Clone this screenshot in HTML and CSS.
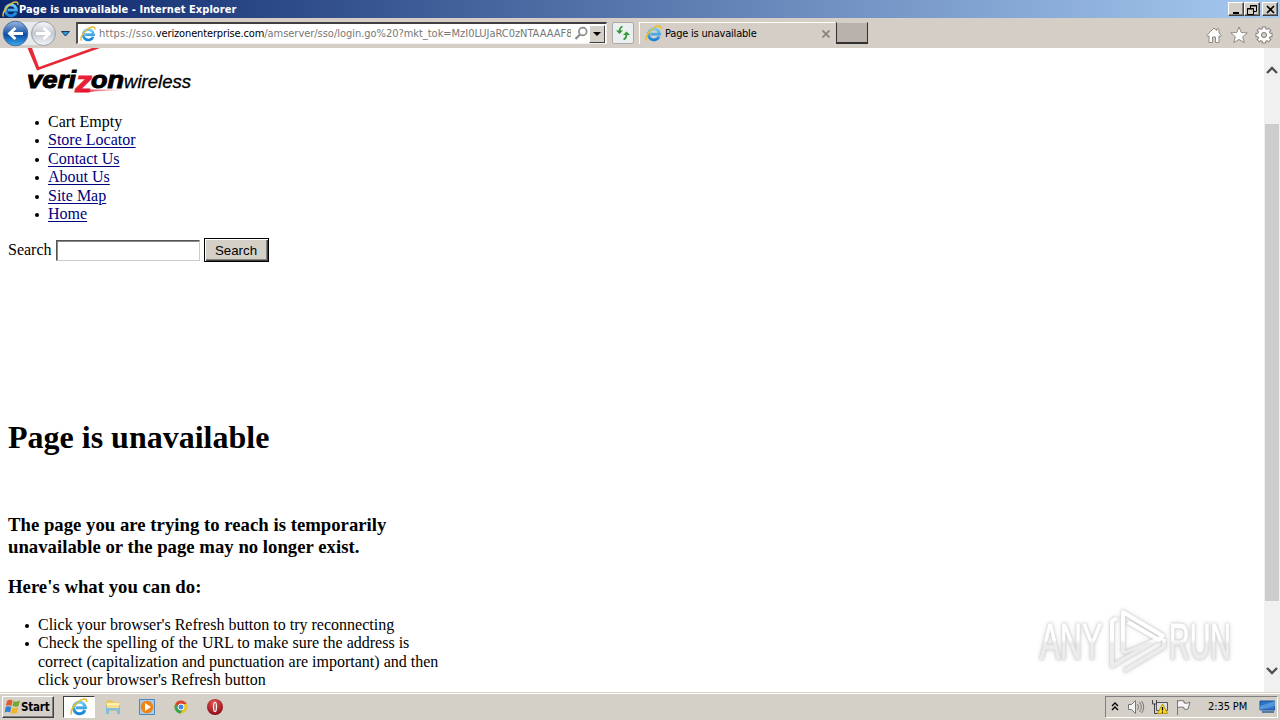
FILE: index.html
```html
<!DOCTYPE html>
<html lang="en">
<head>
<meta charset="utf-8">
<title>Page is unavailable</title>
<link rel="stylesheet" href="styles.css">
</head>
<body>
<svg class="defs" width="0" height="0">
  <defs>
    <linearGradient id="ieBlue" x1="0" y1="0" x2="0" y2="1"><stop offset="0" stop-color="#72cdf7"/><stop offset="1" stop-color="#1583d6"/></linearGradient>
    <linearGradient id="navBlue" x1="0" y1="0" x2="0" y2="1"><stop offset="0" stop-color="#9fb9dc"/><stop offset=".45" stop-color="#2460ae"/><stop offset=".55" stop-color="#0b4ba3"/><stop offset="1" stop-color="#38aef0"/></linearGradient>
    <linearGradient id="navGray" x1="0" y1="0" x2="0" y2="1"><stop offset="0" stop-color="#f8f9fb"/><stop offset=".5" stop-color="#c3c8cf"/><stop offset="1" stop-color="#f4f7fa"/></linearGradient>
    <linearGradient id="swoosh" x1="0" y1="0" x2="1" y2="0"><stop offset="0" stop-color="#e8112d"/><stop offset="1" stop-color="#e8112d" stop-opacity="0"/></linearGradient>
    <linearGradient id="wmFade" gradientUnits="userSpaceOnUse" x1="0" y1="8" x2="0" y2="68"><stop offset="0" stop-color="#fff"/><stop offset=".48" stop-color="#fff"/><stop offset=".54" stop-color="#ececec"/><stop offset="1" stop-color="#ececec"/></linearGradient>
    <radialGradient id="opera" cx=".45" cy=".3" r=".7"><stop offset="0" stop-color="#e85a58"/><stop offset="1" stop-color="#8c0a12"/></radialGradient>
    <symbol id="ie" viewBox="0 0 16 16">
      <path d="M13.2 10.8A5.2 5.2 0 1 1 13.6 8.6H5.2" fill="none" stroke="url(#ieBlue)" stroke-width="2.7"/>
      <path d="M1.500 14.600C-.6 12 4 5 9 2.200 12.400.3 15.500.4 14.800 3.600" fill="none" stroke="#e9bd2d" stroke-width="1.400"/>
    </symbol>
  </defs>
</svg>

<header class="titlebar">
  <svg class="title-icon" width="17" height="17"><use href="#ie"/></svg>
  <span class="title-text">Page is unavailable - Internet Explorer</span>
  <div class="window-buttons">
    <svg class="wb" width="16" height="14"><path d="M4 10h6" stroke="#000" stroke-width="2"/></svg>
    <svg class="wb" width="16" height="14"><path d="M5.500 5V2.500h6v6H9M5 3h7M2.500 5.500h6v6h-6zM2 6h7" fill="none" stroke="#000"/></svg>
    <svg class="wb wb-close" width="16" height="14"><path d="M4 3l7 7M11 3l-7 7" stroke="#000" stroke-width="1.700"/></svg>
  </div>
</header>

<nav class="toolbar">
  <svg class="nav-buttons" width="72" height="30" viewBox="0 0 72 30">
    <rect x="14" y="4" width="30" height="23" fill="#e9eaec"/>
    <circle cx="15.500" cy="15.500" r="12.300" fill="url(#navBlue)" stroke="#4b6da5"/>
    <path d="M23 15.500H10M15.500 10l-6 5.500 6 5.500" fill="none" stroke="#fff" stroke-width="2.800"/>
    <circle cx="43.500" cy="15.500" r="12" fill="url(#navGray)" stroke="#999fa9"/>
    <path d="M36 15.500h13M43.500 10l6 5.500-6 5.500" fill="none" stroke="#fff" stroke-width="2.800"/>
    <path d="M61.500 13.500h8l-4 4.500z" fill="#2b9bd8" stroke="#123c66"/>
  </svg>
  <div class="address">
    <svg width="16" height="16"><use href="#ie"/></svg>
    <span class="url"><span class="url-scheme">https://sso.</span><b>verizonenterprise.com</b><span class="url-path">/amserver/sso/login.go%20?mkt_tok=MzI0LUJaRC0zNTAAAAF8</span></span>
    <svg class="magnifier" width="15" height="15"><circle cx="8.800" cy="5.500" r="3.900" fill="none" stroke="#8b8b8b" stroke-width="1.700"/><path d="M6 8.500L1.500 13" stroke="#8b8b8b" stroke-width="2.300"/></svg>
    <svg class="drop" width="16" height="18"><path d="M3 6h8l-4 4z" fill="#000"/></svg>
  </div>
  <div class="refresh"><svg width="18" height="18"><path d="M8.500 2.500Q5.500 3.500 5.500 8" fill="none" stroke="#2c9a35" stroke-width="1.800"/><path d="M2 6.500h7L5.500 10z" fill="#2c9a35"/><path d="M9.500 15.500Q12.500 14.500 12.500 10" fill="none" stroke="#2c9a35" stroke-width="1.800"/><path d="M9 11h7l-3.500-3.500z" fill="#2c9a35"/></svg></div>
  <div class="tab">
    <svg width="17" height="17"><use href="#ie"/></svg>
    <span class="tab-title">Page is unavailable</span>
    <svg class="tab-close" width="8" height="8"><path d="M.5 .5l7 7M7.500 .5l-7 7" stroke="#88827d" stroke-width="1.700"/></svg>
  </div>
  <div class="new-tab"></div>
  <div class="tools">
    <svg width="18" height="18"><path d="M1.500 9.500L9 2l2.500 2.500V3h2.500v4l2.500 2.500-1.500 1-1-.8v6.800h-3.500V11H7.500v5.500H4V9.700l-1 .8z" fill="#fff" stroke="#8f8b87"/></svg>
    <svg width="18" height="18"><path d="M9 1l2.300 5.500 6 .4-4.600 3.800 1.500 5.900L9 13.500l-5.200 3.100 1.500-5.900L.7 6.900l6-.4z" fill="#fff" stroke="#8f8b87"/></svg>
    <svg width="18" height="18"><g fill="none" stroke="#85817d"><path d="M9 .5v17M.5 9h17M3 3l12 12M15 3L3 15" stroke-width="4.400"/><circle cx="9" cy="9" r="4.500" stroke-width="4.600"/></g><g fill="none" stroke="#fff"><path d="M9 1.500v15M1.500 9h15M3.700 3.700l10.600 10.600M14.300 3.700L3.700 14.300" stroke-width="2.400"/><circle cx="9" cy="9" r="4.500" stroke-width="2.800"/></g><circle cx="9" cy="9" r="2.600" fill="#d4cec7" stroke="#85817d"/></svg>
  </div>
</nav>

<div class="viewport">
  <main class="page">
    <svg class="logo" width="200" height="50" viewBox="0 0 200 50">
      <path d="M27.500 0l9.500 22.500L100 0H92L39 19 32 0z" fill="#e62a38"/>
      <g class="logo-bold"><text x="27" y="40" textLength="49" lengthAdjust="spacingAndGlyphs">veri</text><text x="91" y="40" textLength="33" lengthAdjust="spacingAndGlyphs">on</text></g>
      <text class="logo-z" x="75" y="44" textLength="17" lengthAdjust="spacingAndGlyphs">z</text>
      <path d="M82 41.500h40v1q-20 0-32 1.500H80z" fill="url(#swoosh)"/>
      <text class="logo-light" x="124" y="40" textLength="67" lengthAdjust="spacingAndGlyphs">wireless</text>
    </svg>
    <ul class="site-links">
      <li>Cart Empty</li>
      <li><a>Store Locator</a></li>
      <li><a>Contact Us</a></li>
      <li><a>About Us</a></li>
      <li><a>Site Map</a></li>
      <li><a>Home</a></li>
    </ul>
    <div class="search"><label for="q">Search</label><input id="q" type="text"><button>Search</button></div>
    <h1>Page is unavailable</h1>
    <h3>The page you are trying to reach is temporarily<br>unavailable or the page may no longer exist.</h3>
    <h3 class="advice">Here's what you can do:</h3>
    <ul class="steps">
      <li>Click your browser's Refresh button to try reconnecting</li>
      <li>Check the spelling of the URL to make sure the address is<br>correct (capitalization and punctuation are important) and then<br>click your browser's Refresh button</li>
    </ul>
  </main>
  <div class="scrollbar">
    <svg class="arrow-up" width="15" height="12"><path d="M3 9l5-5 5 5" fill="none" stroke="#505050" stroke-width="2.300"/></svg>
    <div class="thumb"></div>
    <svg class="arrow-down" width="15" height="12"><path d="M3 3l5 5 5-5" fill="none" stroke="#505050" stroke-width="2.300"/></svg>
  </div>
  <svg class="watermark" width="220" height="76" viewBox="0 0 220 76">
    <g class="wm-text"><text x="8" y="56" textLength="62" lengthAdjust="spacingAndGlyphs">ANY</text><text x="137" y="56" textLength="62" lengthAdjust="spacingAndGlyphs">RUN</text></g>
    <g fill="none" stroke="url(#wmFade)" stroke-width="4" stroke-linejoin="round">
      <path d="M91 50V9l40 24-4 4-31-18"/>
      <path d="M85 15l-5 3v45l48-28M92 68l40-24v-8"/>
      <path d="M92 50l36-15" stroke-width="3"/>
    </g>
  </svg>
</div>

<footer class="taskbar">
  <div class="start">
    <svg width="17" height="17"><path d="M3 3q3-2 5.500-.5L7.500 8Q5 6.500 2 8z" fill="#e65a28"/><path d="M9.500 3Q12 4.500 16 2.500L14.500 8Q12 9.500 8.500 8z" fill="#70aa35"/><path d="M1.700 9Q4.500 7.500 7.300 9l-1.200 5.500Q3.500 13 .7 14.500z" fill="#367fd0"/><path d="M8.300 9.500Q11.500 11 14.200 9L13 14.800Q10 16.500 7 15z" fill="#f2b526"/></svg>
    <span>Start</span>
  </div>
  <div class="task active"><svg width="18" height="18"><use href="#ie"/></svg></div>
  <div class="task"><svg width="18" height="18"><path d="M2 4l2-2h4l1.500 2H15v9H2z" fill="#edc568"/><path d="M3 5h12v4H3z" fill="#fff2b4"/><path d="M2 8h14v8h-3v-3.500H5V16H2z" fill="#83bddb"/><path d="M3 7h12v3H3z" fill="#f7df8b"/></svg></div>
  <div class="task"><svg width="18" height="18"><path d="M1.500 1.500h15v15h-15z" fill="#a6cdec" stroke="#4d87bc"/><circle cx="9" cy="9" r="6.300" fill="#f28313"/><path d="M7 5l6 4-6 4z" fill="#fff"/></svg></div>
  <div class="task"><svg width="18" height="18"><circle cx="9" cy="9" r="6.500" fill="#e8c52b"/><path d="M3.400 5.700A6.500 6.500 0 0 1 14.700 6H9L6.500 11z" fill="#dc4332"/><path d="M3.400 5.700A6.500 6.500 0 0 0 8.500 15.500L11.500 10.500 6 10z" fill="#36a352"/><circle cx="9" cy="9" r="3" fill="#4688e5" stroke="#fff"/></svg></div>
  <div class="task"><svg width="18" height="18"><circle cx="9" cy="9" r="8" fill="url(#opera)"/><ellipse cx="9" cy="9" rx="2" ry="5.300" fill="#fff"/><ellipse cx="9" cy="9" rx=".7" ry="4.300" fill="#a42c2e"/></svg></div>
  <div class="tray">
    <svg width="8" height="14"><path d="M1 6l3-3 3 3M1 10l3-3 3 3" fill="none" stroke="#000" stroke-width="1.400"/></svg>
    <svg class="speaker" width="18" height="18"><path d="M1.500 6.500h3l4-4v13l-4-4h-3z" fill="#f5f5f5" stroke="#777"/><path d="M10.500 6q2 3 0 6M12.500 4q3.500 5 0 10M14.500 3q4.500 6 0 12" fill="none" stroke="#777"/></svg>
    <svg class="network" width="18" height="18"><path d="M5.500 4.500h11v8h-11z" fill="#ddd" stroke="#555"/><path d="M1.500 2v4h4V2M3.500 6v9.500H8" fill="none" stroke="#444"/><path d="M11.500 6l5 9.500h-10z" fill="#ffdc23" stroke="#b99508"/><path d="M11.500 9v3.500M11.500 13.500v1.300" stroke="#000" stroke-width="1.300"/></svg>
    <svg class="flag" width="18" height="18"><path d="M2.500 17V2M3 3q3-1 6 0v2q3 1 6-1l-2 7q-2 1-4 0V9.500q-3-1-6 0" fill="#f5f5f5" stroke="#777"/></svg>
    <span class="clock">2:35 PM</span>
    <svg class="desktop" width="16" height="16"><path d="M1 2h15v9H1z" fill="#2f73c5" stroke="#17539b"/><path d="M1 7L16 2v5L1 11z" fill="#5596da"/><path d="M3 13h12" stroke="#557ba6" stroke-width="2"/></svg>
  </div>
</footer>
</body>
</html>
```

FILE: styles.css
```css
* { box-sizing: border-box; }
html, body { margin: 0; width: 1280px; height: 720px; overflow: hidden; }
body { display: flex; flex-direction: column; background: #fff; color: #000; font: 11px "DejaVu Sans Condensed", "DejaVu Sans", sans-serif; font-stretch: condensed; }
svg { display: block; flex: none; }
.defs { position: absolute; }
.titlebar { height: 18px; flex: none; display: flex; align-items: center; padding: 0 2px; background: linear-gradient(90deg, #0b266b, #a6caf0); color: #fff; white-space: nowrap; }
.title-text { font-weight: bold; letter-spacing: .06px; }
.window-buttons { display: flex; margin-left: auto; }
.wb { background: #d4d0c8; border: 1px solid; border-color: #fff #404040 #404040 #fff; box-shadow: inset -1px -1px #808080; }
.wb-close { margin-left: 2px; }

.toolbar { height: 30px; flex: none; display: flex; align-items: center; background: #d4cec7; white-space: nowrap; }
.address { display: flex; align-items: center; margin-left: 4px; width: 531px; height: 22px; padding: 0 1px 0 2px; background: #fff; border: 1px solid #f2f0ed; border-top: 2px solid #404040; border-left: 2px solid #505050; }
.url { width: 472px; margin-left: 3px; color: #777; overflow: hidden; display: flex; letter-spacing: -.03px; }
.url-scheme { letter-spacing: .17px; }
.url b { color: #000; font-weight: normal; letter-spacing: -.14px; }
.magnifier { margin-left: 3px; }
.drop { margin-left: auto; background: #d4d0c8; border: 1px solid; border-color: #fff #404040 #404040 #fff; }
.refresh { display: flex; align-items: center; justify-content: center; width: 22px; height: 22px; margin-left: 5px; background: #eceff0; border: 1px solid #aaa; border-radius: 2px; }
.tab { display: flex; align-items: center; width: 196px; height: 22px; padding: 0 5px; margin-left: 5px; border-top: 1px solid #fff; border-left: 1px solid #fff; }
.tab-title { margin-left: 3px; letter-spacing: -.2px; }
.tab-close { margin-left: auto; }
.new-tab { width: 32px; height: 22px; background: #b9b2ac; border: 1px solid #303030; border-top-color: #d4cec7; border-bottom-width: 2px; margin-left: 1px; }
.tools { display: flex; gap: 7px; margin-left: auto; padding: 4px 7px 0 0; }

.viewport { position: relative; display: flex; height: 644px; flex: none; overflow: hidden; }
.page { flex: 1; font: 16px/18.4px "Liberation Serif", serif; }
.page ul { margin: 0; padding: 0; list-style: none; }
.page li { position: relative; }
.page li::before { content: ""; position: absolute; left: -13px; top: 8px; width: 4px; height: 4px; border-radius: 50%; background: #000; }
.logo-bold { font: italic bold 24px "Liberation Sans", sans-serif; stroke: #000; stroke-width: 1px; }
.logo-z { font: italic bold 30px "Liberation Sans", sans-serif; fill: #e62038; stroke: #e62038; stroke-width: .8px; }
.logo-light { font: italic 18.500px "Liberation Sans", sans-serif; stroke: #000; stroke-width: .3px; }
.page .site-links { margin: 15px 0 0 48px; }
.site-links a { color: #000080; text-decoration: underline; text-underline-offset: 2px; text-decoration-thickness: 1px; }
.search { display: flex; align-items: center; margin: 15px 0 0 8px; height: 24px; }
.search input { width: 144px; height: 21px; margin-left: 4px; border: 1px solid; border-color: #555 #ccc #ccc #555; box-shadow: inset 1px 1px #888; }
.search button { width: 65px; height: 24px; margin-left: 4px; padding: 0; background: #d4d0c8; border: 1px solid #000; box-shadow: inset 1px 1px #fff, inset -1px -1px #404040, inset -2px -2px #808080; font: 13.300px "Liberation Sans", sans-serif; }
h1 { margin: 156.600px 0 0 8px; font: bold 32px/37px "Liberation Serif", serif; }
h3 { margin: 58px 0 0 8px; font: bold 18.720px/22px "Liberation Serif", serif; letter-spacing: .02px; }
h3.advice { margin-top: 18px; }
.page .steps { margin: 18px 0 0 38px; }

.scrollbar { display: flex; flex-direction: column; width: 16px; background: #f0f0f0; }
.arrow-up { margin-top: 16px; }
.thumb { height: 477px; margin: 48px 1px 0; background: #cdcdcd; }
.arrow-down { margin: auto 0 15px; }
.watermark { position: absolute; left: 1032px; top: 555px; filter: drop-shadow(0 0 1px #c4c4c4) drop-shadow(0 0 2px #ddd); }
.wm-text { font: 50px "Liberation Sans Narrow", "Liberation Sans", sans-serif; fill: url(#wmFade); stroke: url(#wmFade); }

.taskbar { height: 28px; display: flex; align-items: center; padding: 2px 2px 2px; background: #d4d0c8; border-top: 1px solid #d4d0c8; box-shadow: inset 0 1px #fff; }
.start { display: flex; align-items: center; width: 52px; height: 22px; padding-left: 1px; border: 1px solid; border-color: #fff #404040 #404040 #fff; box-shadow: inset -1px -1px #808080; font-weight: bold; font-size: 11.500px; letter-spacing: -.2px; }
.task { display: flex; align-items: center; justify-content: center; width: 34px; height: 22px; }
.task.active { width: 32px; margin: 0 1px 0 9px; background: #fff; border: 1px solid; border-color: #404040 #fff #fff #404040; }
.tray { display: flex; align-items: center; width: 173px; height: 22px; margin-left: auto; padding-left: 5px; border: 1px solid; border-color: #808080 #fff #fff #808080; }
.speaker { margin-left: 8px; }
.network { margin-left: 6px; }
.flag { margin-left: 6px; }
.clock { margin-left: 15px; width: 41px; white-space: nowrap; letter-spacing: -.1px; }
.desktop { margin-left: 10px; }
```
